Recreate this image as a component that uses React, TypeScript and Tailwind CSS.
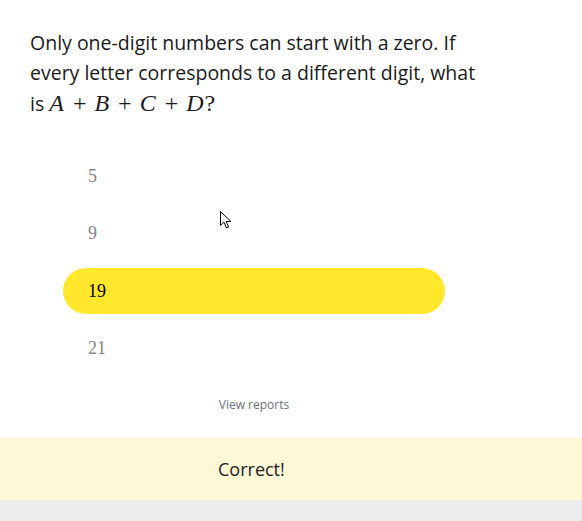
import React from 'react'

const sans = { fontFamily: '"Open Sans", "Noto Sans", sans-serif' }
const serif = { fontFamily: '"Liberation Serif", "DejaVu Serif", serif' }

const options = ['5', '9', '19', '21']

function M({ children }: { children: React.ReactNode }) {
  return <span className="inline-block text-[24px] leading-[30px] italic pr-[1px]" style={serif}>{children}</span>
}

function Op({ children }: { children: React.ReactNode }) {
  return <span className="inline-block text-[24px] leading-[30px] mx-[8px]" style={serif}>{children}</span>
}

export default function App() {
  const selected = '19'
  return (
    <div className="relative w-[582px] h-[521px] bg-white flex flex-col overflow-hidden" style={sans}>
      <div className="ml-[30px] w-[455px] pt-[28px] text-[19.5px] leading-[30px] text-[#1a1a1a]">
        <span>Only one-digit numbers can start with a zero. If every letter corresponds to a different digit, what</span>{' '}
        <span className="inline-block mr-[5px]">is</span>
        <M>A</M><Op>+</Op><M>B</M><Op>+</Op><M>C</M><Op>+</Op><M>D</M>
        <span className="inline-block text-[24px] leading-[30px]" style={serif}>?</span>
      </div>

      <div className="ml-[63px] w-[382px] mt-[34px] flex flex-col gap-[11.5px]">
        {options.map((o) => (
          <div
            key={o}
            className={
              'h-[46px] rounded-full flex items-center pl-[25px] text-[18px] ' +
              (o === selected ? 'bg-[#ffe72b] text-black' : 'text-[#858585]')
            }
            style={serif}
          >
            {o}
          </div>
        ))}
        <div className="text-center text-[12px] text-[#6b7280] mt-[13px]">View reports</div>
      </div>

      <div className="mt-auto">
        <div className="h-[62px] bg-[#fef8d6] flex items-center pl-[218px] text-[18px] text-[#222]">Correct!</div>
        <div className="h-[21px] bg-[#ebecee]" />
      </div>

      <svg className="absolute left-[220px] top-[211px]" width="13" height="19" viewBox="0 0 13 19">
        <path d="M0.5 0.5 L0.5 14.5 L4 11.2 L6.5 17 L8.6 16.1 L6.2 10.5 L11 10.5 Z" fill="white" stroke="black" strokeWidth="1" strokeLinejoin="miter" />
      </svg>
    </div>
  )
}
